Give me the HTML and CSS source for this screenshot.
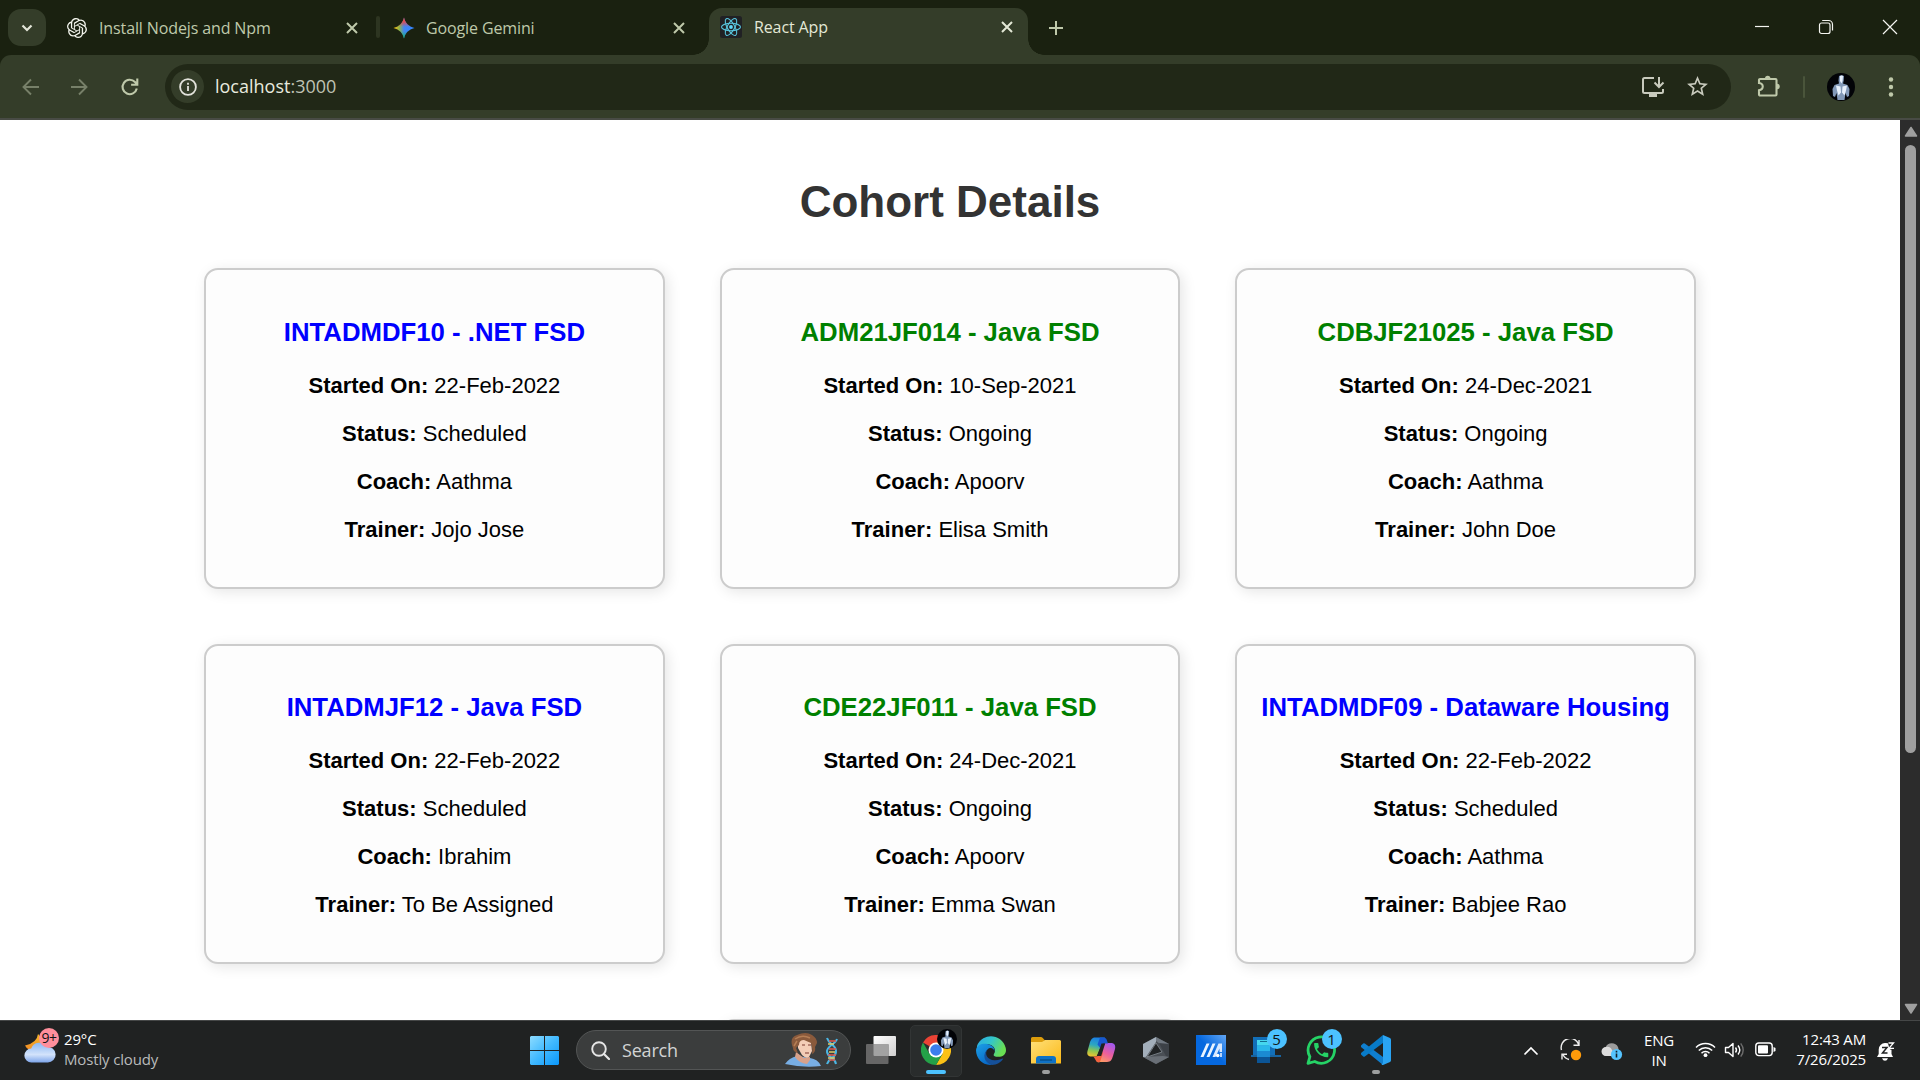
FILE: index.html
```html
<!DOCTYPE html>
<html lang="en">
<head>
<meta charset="utf-8">
<title>React App</title>
<link rel="stylesheet" href="styles.css">
</head>
<body>
<div class="screen">
  <header class="tabstrip">
    <div class="tab-search"><svg width="14" height="14" viewBox="0 0 14 14"><path d="M2.500 4.500 7 9l4.500-4.500" fill="none" stroke="#e3e6d8" stroke-width="2.200"/></svg></div>
    <div class="tab tab-one">
      <svg class="fav" width="20" height="20" viewBox="0 0 24 24"><path fill="#f4f6ee" d="M22.2819 9.8211a5.9847 5.9847 0 0 0-.5157-4.9108 6.0462 6.0462 0 0 0-6.5098-2.9A6.0651 6.0651 0 0 0 4.9807 4.1818a5.9847 5.9847 0 0 0-3.9977 2.9 6.0462 6.0462 0 0 0 .7427 7.0966 5.98 5.98 0 0 0 .511 4.9107 6.051 6.051 0 0 0 6.5146 2.9001A5.9847 5.9847 0 0 0 13.2599 24a6.0557 6.0557 0 0 0 5.7718-4.2058 5.9894 5.9894 0 0 0 3.9977-2.9001 6.0557 6.0557 0 0 0-.7475-7.0729zm-9.022 12.6081a4.4755 4.4755 0 0 1-2.8764-1.0408l.1419-.0804 4.7783-2.7582a.7948.7948 0 0 0 .3927-.6813v-6.7369l2.02 1.1686a.071.071 0 0 1 .038.052v5.5826a4.504 4.504 0 0 1-4.4945 4.4944zm-9.6607-4.1254a4.4708 4.4708 0 0 1-.5346-3.0137l.142.0852 4.783 2.7582a.7712.7712 0 0 0 .7806 0l5.8428-3.3685v2.3324a.0804.0804 0 0 1-.0332.0615L9.74 19.9502a4.4992 4.4992 0 0 1-6.1408-1.6464zM2.3408 7.8956a4.485 4.485 0 0 1 2.3655-1.9728V11.6a.7664.7664 0 0 0 .3879.6765l5.8144 3.3543-2.0201 1.1685a.0757.0757 0 0 1-.071 0l-4.8303-2.7865A4.504 4.504 0 0 1 2.3408 7.872zm16.5963 3.8558L13.1038 8.364 15.1192 7.2a.0757.0757 0 0 1 .071 0l4.8303 2.7913a4.4944 4.4944 0 0 1-.6765 8.1042v-5.6772a.79.79 0 0 0-.407-.667zm2.0107-3.0231l-.142-.0852-4.7735-2.7818a.7759.7759 0 0 0-.7854 0L9.409 9.2297V6.8974a.0662.0662 0 0 1 .0284-.0615l4.8303-2.7866a4.4992 4.4992 0 0 1 6.6802 4.66zM8.3065 12.863l-2.02-1.1638a.0804.0804 0 0 1-.038-.0567V6.0742a4.4992 4.4992 0 0 1 7.3757-3.4537l-.142.0805L8.704 5.459a.7948.7948 0 0 0-.3927.6813zm1.0976-2.3654l2.602-1.4998 2.6069 1.4998v2.9994l-2.5974 1.4997-2.6067-1.4997Z"/></svg>
      <span class="tab-title">Install Nodejs and Npm</span>
      <svg class="x" width="12" height="12" viewBox="0 0 12 12"><path d="M1 1l10 10M11 1 1 11"/></svg>
    </div>
    <div class="tab-sep"></div>
    <div class="tab tab-two">
      <svg class="fav" width="22" height="22" viewBox="0 0 22 22"><defs>
        <linearGradient id="gm" x1="0" y1=".5" x2="1" y2=".5"><stop offset=".02" stop-color="#fbbc04"/><stop offset=".28" stop-color="#8fb44e"/><stop offset=".5" stop-color="#4285f4"/><stop offset="1" stop-color="#3186ff"/></linearGradient>
        <linearGradient id="gmv" x1="0" y1="0" x2="0" y2="1"><stop offset="0" stop-color="#f4433c"/><stop offset=".2" stop-color="#f4433c" stop-opacity=".85"/><stop offset=".45" stop-color="#f4433c" stop-opacity="0"/><stop offset=".65" stop-color="#0ebc5f" stop-opacity="0"/><stop offset="1" stop-color="#0ebc5f"/></linearGradient></defs>
        <path fill="url(#gm)" d="M11 .5c1.200 5.400 4.500 8.800 10.500 10.500-6 1.700-9.300 5.100-10.500 10.500C9.800 16.100 6.500 12.700.5 11 6.500 9.300 9.800 5.900 11 .5z"/><path fill="url(#gmv)" d="M11 .5c1.200 5.400 4.500 8.800 10.500 10.500-6 1.700-9.300 5.100-10.500 10.500C9.800 16.100 6.500 12.700.5 11 6.500 9.300 9.800 5.900 11 .5z"/></svg>
      <span class="tab-title">Google Gemini</span>
      <svg class="x" width="12" height="12" viewBox="0 0 12 12"><path d="M1 1l10 10M11 1 1 11"/></svg>
    </div>
    <div class="tab tab-active">
      <svg class="fav" width="22" height="22" viewBox="0 0 22 22"><rect width="22" height="22" rx="2.500" fill="#202124"/><g fill="none" stroke="#58c4dc" stroke-width="1.100"><ellipse cx="11" cy="11" rx="9.500" ry="3.700"/><ellipse cx="11" cy="11" rx="9.500" ry="3.700" transform="rotate(60 11 11)"/><ellipse cx="11" cy="11" rx="9.500" ry="3.700" transform="rotate(120 11 11)"/></g><circle cx="11" cy="11" r="1.900" fill="#61dafb"/></svg>
      <span class="tab-title">React App</span>
      <svg class="x" width="12" height="12" viewBox="0 0 12 12"><path d="M1 1l10 10M11 1 1 11"/></svg>
    </div>
    <svg class="plus" width="14" height="14" viewBox="0 0 14 14"><path d="M7 0v14M0 7h14" stroke="#bfc9aa" stroke-width="2"/></svg>
    <div class="window-buttons">
      <svg width="16" height="16" viewBox="0 0 16 16"><path d="M1 7.500h14"/></svg>
      <svg width="16" height="16" viewBox="0 0 16 16"><rect x="1.500" y="4" width="10.500" height="10.500" rx="2"/><path d="M4.200 1.500h6.300a4 4 0 0 1 4 4v6"/></svg>
      <svg width="16" height="16" viewBox="0 0 16 16"><path d="M1 1l14 14M15 1 1 15"/></svg>
    </div>
  </header>

  <nav class="toolbar">
    <svg class="nav-i dim" width="18" height="18" viewBox="0 0 18 18"><path d="M17 9H2M9 1.500 1.500 9 9 16.500"/></svg>
    <svg class="nav-i dim fwd" width="18" height="18" viewBox="0 0 18 18"><path d="M1 9h15M9 1.500 16.500 9 9 16.500"/></svg>
    <svg class="nav-i reload" width="20" height="20" viewBox="0 0 20 20"><path d="M16.800 11.500A7.200 7.200 0 1 1 15 5l2 2.300M17.300 1.500v6.200h-6.200" /></svg>
    <div class="omnibox">
      <span class="info"><svg width="18" height="18" viewBox="0 0 18 18"><circle cx="9" cy="9" r="7.900" fill="none" stroke="#e3e3dc" stroke-width="1.800"/><path d="M9 8v5M9 4.800v1.900" stroke="#e3e3dc" stroke-width="1.800"/></svg></span>
      <span class="url">localhost<span class="port">:3000</span></span>
      <svg class="install" width="24" height="22" viewBox="0 0 24 22"><path d="M13 2H3.500A1.500 1.500 0 0 0 2 3.500v12A1.500 1.500 0 0 0 3.500 17h17a1.500 1.500 0 0 0 1.500-1.500V13M18 1v9M13.500 6.500 18 11l4.500-4.500" fill="none" stroke="#c8cabd" stroke-width="2"/><path d="M8 17h8v4H8z" fill="#c8cabd"/></svg>
      <svg class="star" width="25" height="25" viewBox="0 0 24 24"><path fill="#c8cabd" d="M22 9.240l-7.190-.62L12 2 9.190 8.630 2 9.240l5.460 4.730L5.820 21 12 17.270 18.180 21l-1.630-7.030L22 9.240zM12 15.400l-3.760 2.270 1-4.280-3.320-2.880 4.380-.38L12 6.100l1.710 4.040 4.380.38-3.320 2.880 1 4.280L12 15.400z"/></svg>
    </div>
    <svg class="puzzle" width="24" height="24" viewBox="0 0 24 24"><path d="M3 5h5.500M14 5h4.500a1 1 0 0 1 1 1v14.500a1 1 0 0 1-1 1H3a1 1 0 0 1-1-1v-4.300c5-.6 5-6.600 0-7.200V6a1 1 0 0 1 1-1h15" fill="none" stroke="#bfc9aa" stroke-width="2.100"/><path d="M8 4.500a2.700 2.700 0 0 1 5.400 0M20 9.700a2.800 2.800 0 0 1 0 5.600" fill="#bfc9aa"/></svg>
    <div class="bar-sep"></div>
    <svg class="avatar" width="28" height="28" viewBox="0 0 28 28"><defs><symbol id="pf" viewBox="0 0 28 28"><circle cx="14" cy="14" r="14" fill="#020307"/><path d="M12 3q2.500-1.500 5 0l-.3 4.500-.7 3 4.500 1.500 2 4-.5 7-2 1-1.500-4-1 7h-7l-1-7-1.500 4-2-1-.5-7 2-4 4.500-1.500-.5-3z" fill="#8299b8"/><path d="M13 3q2-1 3 0l-.5 5-1 2.500-1.500-2.500zM9 12.500l4.500 1 .5 6-2.500 3-1.500-5zM20 12.500l-4.500 1-.5 6 2.500 3 1.500-5z" fill="#e8f1fc"/></symbol></defs><use href="#pf"/></svg>
    <svg class="dots" width="6" height="22" viewBox="0 0 6 22" fill="#bfc9aa"><circle cx="3" cy="3.500" r="2.200"/><circle cx="3" cy="11" r="2.200"/><circle cx="3" cy="18.500" r="2.200"/></svg>
  </nav>

  <div class="viewport">
    <main class="page">
      <h1>Cohort Details</h1>
      <section class="cards">
        <article class="card"><h3 class="scheduled">INTADMDF10 - .NET FSD</h3><p><b>Started On:</b> 22-Feb-2022</p><p><b>Status:</b> Scheduled</p><p><b>Coach:</b> Aathma</p><p><b>Trainer:</b> Jojo Jose</p></article>
        <article class="card"><h3 class="ongoing">ADM21JF014 - Java FSD</h3><p><b>Started On:</b> 10-Sep-2021</p><p><b>Status:</b> Ongoing</p><p><b>Coach:</b> Apoorv</p><p><b>Trainer:</b> Elisa Smith</p></article>
        <article class="card"><h3 class="ongoing">CDBJF21025 - Java FSD</h3><p><b>Started On:</b> 24-Dec-2021</p><p><b>Status:</b> Ongoing</p><p><b>Coach:</b> Aathma</p><p><b>Trainer:</b> John Doe</p></article>
        <article class="card"><h3 class="scheduled">INTADMJF12 - Java FSD</h3><p><b>Started On:</b> 22-Feb-2022</p><p><b>Status:</b> Scheduled</p><p><b>Coach:</b> Ibrahim</p><p><b>Trainer:</b> To Be Assigned</p></article>
        <article class="card"><h3 class="ongoing">CDE22JF011 - Java FSD</h3><p><b>Started On:</b> 24-Dec-2021</p><p><b>Status:</b> Ongoing</p><p><b>Coach:</b> Apoorv</p><p><b>Trainer:</b> Emma Swan</p></article>
        <article class="card"><h3 class="scheduled">INTADMDF09 - Dataware Housing</h3><p><b>Started On:</b> 22-Feb-2022</p><p><b>Status:</b> Scheduled</p><p><b>Coach:</b> Aathma</p><p><b>Trainer:</b> Babjee Rao</p></article>
        <article class="card"></article>
      </section>
    </main>
    <aside class="scrollbar">
      <svg width="14" height="12" viewBox="0 0 14 12"><path d="M7 1.500 12.500 10h-11z" fill="#9f9f9f" stroke="#9f9f9f" stroke-width="1.500" stroke-linejoin="round"/></svg>
      <div class="thumb"></div>
      <svg class="down" width="14" height="12" viewBox="0 0 14 12"><path d="M7 10 12.500 1.500h-11z" fill="#9f9f9f" stroke="#9f9f9f" stroke-width="1.500" stroke-linejoin="round"/></svg>
    </aside>
  </div>

  <footer class="taskbar">
    <div class="weather">
      <svg width="34" height="37" viewBox="0 0 34 37"><defs><linearGradient id="cl" x1="0" y1="0" x2="0" y2="1"><stop offset="0" stop-color="#8db8f2"/><stop offset=".6" stop-color="#d3e3fb"/><stop offset="1" stop-color="#7da5ea"/></linearGradient><linearGradient id="mn" x1="1" y1="0" x2="0" y2="1"><stop offset="0" stop-color="#f6bd2c"/><stop offset="1" stop-color="#f08a24"/></linearGradient></defs>
        <path d="M14 7q-1 9-13 11.500 3 6 11 5 8-1 10-8z" fill="url(#mn)"/>
        <path d="M7.500 35.500a7 7 0 0 1-.3-14A8.500 8.500 0 0 1 22.600 20a7.800 7.800 0 1 1 1 15.500z" fill="url(#cl)"/></svg>
      <span class="count pink">9+</span>
      <div class="two-line"><span>29°C</span><span class="soft">Mostly cloudy</span></div>
    </div>

    <div class="dock">
      <svg class="start" width="29" height="29" viewBox="0 0 29 29"><defs><linearGradient id="wn" x1="0" y1="0" x2="1" y2="1"><stop offset="0" stop-color="#8ddcff"/><stop offset=".5" stop-color="#41b9ff"/><stop offset="1" stop-color="#0a97fb"/></linearGradient></defs><path fill="url(#wn)" d="M1 0h13v14H0V1zM15 0h13l1 1v13H15zM0 15h14v14H1l-1-1zM15 15h14v13l-1 1H15z"/></svg>
      <div class="search">
        <svg width="19" height="19" viewBox="0 0 19 19"><circle cx="8" cy="8" r="6.800" fill="#4b4c4c" stroke="#e6e6e6" stroke-width="1.900"/><path d="M13 13l5 5" stroke="#e6e6e6" stroke-width="2.200" stroke-linecap="round"/></svg>
        <span>Search</span>
        <svg class="bloom" width="54" height="34" viewBox="0 0 54 34"><path d="M0 31q4-6 12-8l13 2q8 1 11 8-18 2-36-2z" fill="#78aee4"/><path d="M11 19l8 6 6-1v3l-3 4q-8-1-12-7z" fill="#d8a18a"/><path d="M13 8q6-4 13 1l1 9-3 6q-3 2-7-2l-4-7z" fill="#f3cdb7"/><path d="M7 12Q5 4 12 2q9-4 15 0 5 3 5 8l-2 4q1 5-3 7 1-6-1-11l-7-3q-5 0-5 5l-3 3 2 5q-5-1-5-5z" fill="#8a5a3c"/><path d="M10 6q7-5 15-1M9 13l3-5" stroke="#b57e55" stroke-width="1.500" fill="none"/><path d="M17 12h3M23 12h3M20 20h4" stroke="#7c3b31" stroke-width="1.100"/><path d="M42 5c2 7 10 7 9 14s-7 5-9 12M52 6c-2 6-11 7-10 13s8 5 9 12" fill="none" stroke="#4bb6e4" stroke-width="2"/><path d="M44 8h7M44 16h7M43 22h8M44 27h6" stroke="#e2574c" stroke-width="1.600"/><path d="M43 11h6M44 19h6M43 25h7" stroke="#dccb6b" stroke-width="1.300"/></svg>
      </div>
      <div class="app"><svg width="30" height="30" viewBox="0 0 30 30"><defs><linearGradient id="tv" x1="0" y1="0" x2="1" y2="1"><stop offset="0" stop-color="#fff"/><stop offset="1" stop-color="#cfcfcf"/></linearGradient></defs><rect x="7.500" y="1" width="22.500" height="20" rx="1" fill="url(#tv)"/><rect x="0" y="9" width="22.500" height="20" rx="1" fill="#666"/><path d="M7.500 9h15v12h-14a1 1 0 0 1-1-1z" fill="#a2a2a2"/></svg></div>
      <div class="app current"><svg width="30" height="30" viewBox="0 0 30 30"><path d="M15 15 2 7.500A15 15 0 0 1 28 7.500z" fill="#ea4335"/><path d="M15 0a15 15 0 0 1 13 7.500H15z" fill="#ea4335"/><path d="M28 7.500A15 15 0 0 1 15 30l6.500-11.200L15 7.500z" fill="#fbc116"/><path d="M2 7.500A15 15 0 0 0 15 30l6.500-11.200-13 0z" fill="#24a148"/><circle cx="15" cy="15" r="7.500" fill="#fff"/><circle cx="15" cy="15" r="5.800" fill="#3b7ded"/></svg><svg class="mini" width="20" height="20" viewBox="0 0 28 28"><use href="#pf"/></svg></div>
      <div class="app"><svg width="30" height="30" viewBox="0 0 30 30"><defs><linearGradient id="e1" x1="0" y1="0" x2="1" y2=".4"><stop offset="0" stop-color="#2caae3"/><stop offset=".5" stop-color="#32c5cc"/><stop offset="1" stop-color="#69df53"/></linearGradient><linearGradient id="e2" x1="0" y1="0" x2=".6" y2="1"><stop offset="0" stop-color="#1ca0e6"/><stop offset="1" stop-color="#0867c6"/></linearGradient></defs><path d="M1 11A15 15 0 0 1 30 15c0 5-4 7-8 6.800-4 0-5-1.300-4-2.800C21 14 17 9.500 11 9 6 8.500 2 11 .8 14z" fill="url(#e1)"/><path d="M0 15C1 9.500 7 8 12 9.200 16 10 19 13 18.500 16.500 18 13 14 12 11.500 14.500 6 20 11 28 16 30 7 30.500 0 24 0 15z" fill="url(#e2)"/><path d="M11.500 14.500C8 19 11.500 25 18.500 25.300c4 .2 7-1.500 8.800-1.700C25 27.500 20.500 30 16 30 8 28 6 19 11.500 14.500z" fill="#155099"/></svg></div>
      <div class="app running"><svg width="30" height="30" viewBox="0 0 30 30"><defs><linearGradient id="fo" x1="0" y1="0" x2="1" y2="1"><stop offset="0" stop-color="#ffe07a"/><stop offset="1" stop-color="#fbb917"/></linearGradient></defs><path d="M0 3.500A1.500 1.500 0 0 1 1.500 2h8.300q1.200 0 2 .9L14 5.500h14.500A1.500 1.500 0 0 1 30 7v5H0z" fill="#dd9d0c"/><path d="M0 7h11l3.200-2H28.500A1.500 1.500 0 0 1 30 6.500v22H0z" fill="url(#fo)"/><path d="M5 28.500V24a3 3 0 0 1 3-3h14a3 3 0 0 1 3 3v4.500z" fill="#0f72c6"/><path d="M9 25h12" stroke="#064c86" stroke-width="1.300"/></svg></div>
      <div class="app"><svg width="30" height="30" viewBox="0 0 30 30"><defs><linearGradient id="c1" x1=".5" y1="0" x2=".3" y2="1"><stop offset="0" stop-color="#1a7ee6"/><stop offset=".4" stop-color="#2da8c0"/><stop offset=".7" stop-color="#8bc653"/><stop offset="1" stop-color="#efc32f"/></linearGradient><linearGradient id="c2" x1=".7" y1="0" x2=".2" y2="1"><stop offset="0" stop-color="#a458ec"/><stop offset=".5" stop-color="#ed5f9c"/><stop offset="1" stop-color="#ffa25c"/></linearGradient></defs><path d="M10 25.500c1 2 3 2 4 1.500h7c4 0 5-3 6-6l2-7c1-4-1-6-4-6h-6z" fill="url(#c2)"/><path d="M19 2.500H9C6 2.500 4.500 5 3.500 9l-2 7c-1 4 1 5.500 4 5.500h5z" fill="url(#c1)"/><path d="M14 2.500h3c4 0 4 3.500 5 6h-4q-2 0-2.500 2l-1 3-3-4z" fill="#1757cf"/><path d="M7 21.500h3q2 0 3-2.500l1-3 3 2-3 9c-5 1-4-3.500-7-5.500z" fill="#f3613f"/><path d="M15.500 8.500h3.700l-4 12.500h-4z" fill="#202323"/></svg></div>
      <div class="app"><svg width="30" height="30" viewBox="0 0 30 30"><path d="M15 2 28 9v13l-13 7-13-7V9z" fill="#4a4f55"/><path d="M15 2v5L5 22l-3 0V9z" fill="#a3afbb"/><path d="M15 2 28 9v7L15 6z" fill="#6f7780"/><path d="M28 9v13l-3-1L18 8z" fill="#3c4147"/><path d="M2 22 22 21l6 1-13 7z" fill="#696f76"/><path d="M15 8 21 17 6 22z" fill="#202325"/><path d="M15 8 21 17 6 22z" fill="none" stroke="#8e969e" stroke-width=".7"/></svg></div>
      <div class="app"><svg width="30" height="30" viewBox="0 0 30 30"><defs><linearGradient id="ma" x1="0" y1="1" x2="1" y2="0"><stop offset=".5" stop-color="#0568df"/><stop offset="1" stop-color="#62a6f4"/></linearGradient></defs><path fill="url(#ma)" d="M0 0h30v30H0z"/><path d="M4.500 22h3L13.500 8.500h-3zM10.500 22h3L19.500 8.500h-3z" fill="#e8f3ff"/><path d="M16.500 22h3l4-8.500V17h2.500V8.500h-3.500z" fill="#d8e9ff"/><circle cx="21.700" cy="20.500" r="1.800" fill="#fff"/><path d="M24 18h2v4h-2z" fill="#b9d5fb"/></svg></div>
      <div class="app"><svg width="30" height="30" viewBox="0 0 30 30"><path d="M2 2h22v20H2z" fill="#126fb8"/><path d="M0 20h30v2H0z" fill="#1763a0"/><path d="M6 5h13v23H6z" fill="#1b8bd2"/><path d="M6 5h13v5.500H6z" fill="#45d7ee"/><path d="M6 10.500h13V16H6z" fill="#29b7ea"/><path d="M6 22h13v6H6z" fill="#0b5596"/><path d="M9 6.500h7" stroke="#126e91"/></svg><span class="count blue">5</span></div>
      <div class="app"><svg width="30" height="30" viewBox="0 0 30 30"><path d="M2 28.300l1.900-6.600A13.200 13.200 0 1 1 8.700 26.500z" fill="none" stroke="#25d366" stroke-width="2.800" stroke-linejoin="round"/><path transform="translate(5.700 5.600) scale(.79)" fill="#25d366" d="M6.620 10.790c1.440 2.830 3.760 5.140 6.590 6.590l2.200-2.200c.27-.27.67-.36 1.020-.24 1.120.37 2.330.57 3.570.57.55 0 1 .45 1 1V20c0 .55-.45 1-1 1-9.390 0-17-7.610-17-17 0-.55.45-1 1-1h3.500c.55 0 1 .45 1 1 0 1.250.2 2.450.57 3.570.11.35.03.74-.25 1.020l-2.200 2.200z"/></svg><span class="count blue">1</span></div>
      <div class="app running"><svg width="30" height="30" viewBox="0 0 30 30"><path d="M0 10.500 2.200 8.500q.8-.5 1.600 0L22 22v8L.3 12.300Q-.8 11.300 0 10.500z" fill="#0f7fd0"/><path d="M0 19.500 2.200 21.500q.8.500 1.600 0L22 8V0L.3 17.700q-1.100 1 0 1.800z" fill="#087bc8"/><path d="M22 0l7 3q1 .5 1 1.800v20.400q0 1.300-1 1.800l-7 3q-1 0-1.500-.6L22 28z" fill="#2aa4f3"/></svg></div>
    </div>

    <div class="tray">
      <svg class="up" width="16" height="10" viewBox="0 0 16 10"><path d="M1.500 8.500 8 2l6.500 6.500" fill="none" stroke="#fff" stroke-width="1.700"/></svg>
      <svg class="sync" width="22" height="22" viewBox="0 0 22 22"><g fill="none" stroke="#eee" stroke-width="1.400"><path d="M1.500 11A9 9 0 0 1 19 6M19 1v5.300h-5.500M9 20.500A9 9 0 0 1 3 15.500M2 20.500v-5.200h5"/></g><circle cx="16" cy="16" r="5.200" fill="#ff9b0a"/></svg>
      <svg class="cloud" width="22" height="20" viewBox="0 0 22 20"><path d="M5 15a4.500 4.500 0 0 1-.5-8.800A7 7 0 0 1 17 6l2 8z" fill="#9b9b9b"/><path d="M5 15a4.500 4.500 0 0 1 0-9q4-1 6 3l4 6z" fill="#dcdcdc"/><circle cx="15.500" cy="13.500" r="5.600" fill="#55c4ff"/><path d="M15.500 12.500v4M15.500 9.800v1.700" stroke="#13222c" stroke-width="1.600"/></svg>
      <div class="lang"><span>ENG</span><span>IN</span></div>
      <svg class="wifi" width="21" height="17" viewBox="0 0 21 17"><g fill="none" stroke="#fff" stroke-width="1.500"><path d="M1 6.500a13.500 13.500 0 0 1 19 0M3.800 9.500a9.500 9.500 0 0 1 13.400 0M6.500 12.200a5.700 5.700 0 0 1 8 0"/></g><circle cx="10.500" cy="14.200" r="1.900" fill="#fff"/></svg>
      <svg class="sound" width="22" height="18" viewBox="0 0 22 18"><g fill="none" stroke="#fff" stroke-width="1.400"><path d="M1.500 6.500h3L9 2.500v13l-4.500-4h-3z" stroke-linejoin="round"/><path d="M11.500 6.500q2 2.500 0 5M14 4.500q3.600 4.500 0 9"/><path d="M16.700 2.300q5 6.700 0 13.400" stroke="#6c6c6c"/></g></svg>
      <svg class="battery" width="21" height="15" viewBox="0 0 21 15"><rect x=".8" y="1" width="16.400" height="12.600" rx="3" fill="none" stroke="#fff" stroke-width="1.400"/><rect x="3" y="3.200" width="10" height="8.200" rx="1" fill="#fff"/><path d="M18.500 5v5l2-1V6z" fill="#fff"/></svg>
      <div class="clock"><span>12:43 AM</span><span>7/26/2025</span></div>
      <svg class="bell" width="20" height="21" viewBox="0 0 20 21"><path d="M9 2a6.500 6.500 0 0 0-6.300 6.500V13L1 16h16l-1.500-3V9L13 2.300zM6 17.200h6q-1 2.500-3 2.500t-3-2.500z" fill="#fff"/><path d="M6 6.500h5L6.500 12h5" fill="none" stroke="#202223" stroke-width="1.500"/><path d="M11 0h9v8.500h-6z" fill="#202223"/><path d="M12.500 2h5L13 7.300h5" fill="none" stroke="#fff" stroke-width="1.300"/></svg>
    </div>
  </footer>
</div>
</body>
</html>
```

FILE: styles.css
```css
* { box-sizing: border-box; }
body { margin: 0; }
svg { display: block; flex: none; }
.screen { width: 1920px; height: 1080px; overflow: hidden; display: flex; flex-direction: column; font-family: "Open Sans", "Noto Sans", sans-serif; background: #1a2110; }

/* Tab strip */
.tabstrip { height: 55px; display: flex; align-items: flex-start; background: #1a2110; padding-left: 8px; }
.tab-search { width: 38px; height: 37px; margin-top: 9px; border-radius: 13px; background: #343d29; display: flex; align-items: center; justify-content: center; }
.tab { height: 55px; display: flex; align-items: center; color: #bfc9aa; font-size: 16px; }
.tab-title { flex: 1; white-space: nowrap; letter-spacing: -0.12px; line-height: 20px; }
.x { fill: none; stroke: #bfc9aa; stroke-width: 2; }
.tab-one { width: 312px; margin-left: 21px; padding-right: 2px; gap: 12px; }
.tab-one .x { margin-right: 19px; }
.tab-sep { width: 4px; height: 22px; margin: 16px 12px 0 -3px; border-radius: 2px; background: #2d3521; }
.tab-two { width: 293px; margin-left: 1px; padding-right: 1px; gap: 11px; margin-right: 23px; }
.tab-active { position: relative; width: 319px; height: 47px; margin-top: 8px; border-radius: 13px 13px 0 0; background: #343d29; color: #e3e8d6; padding: 0 15px 9px 11px; gap: 12px; }
.tab-active::before, .tab-active::after { content: ""; position: absolute; bottom: 0; width: 16px; height: 16px; }
.tab-active::before { left: -16px; background: radial-gradient(circle at 0 0, transparent 15.5px, #343d29 16px); }
.tab-active::after { right: -16px; background: radial-gradient(circle at 100% 0, transparent 15.5px, #343d29 16px); }
.tab-active .x { stroke: #e3e8d6; }
.plus { margin: 21px 0 0 21px; }
.window-buttons { margin: 19px 22px 0 auto; display: flex; gap: 48px; }
.window-buttons svg { fill: none; stroke: #f4f5f0; stroke-width: 1.2; }

/* Toolbar */
.toolbar { height: 65px; background: #343d29; border-bottom: 2px solid #484b45; border-radius: 11px 11px 0 0; display: flex; align-items: center; padding: 0 26px 0 22px; }
.nav-i { fill: none; stroke: #bfc9aa; stroke-width: 2.1; }
.dim { stroke: #778069; stroke-width: 1.9; }
.fwd { margin-left: 30px; }
.reload { margin-left: 32px; }
.omnibox { width: 1566px; height: 46px; margin-left: 25px; border-radius: 23px; background: #212817; display: flex; align-items: center; padding: 0 21px 0 6px; }
.info { width: 33px; height: 33px; border-radius: 50%; background: #343d29; display: flex; align-items: center; justify-content: center; }
.url { flex: 1; margin-left: 11px; color: #e8ebdf; font-size: 18px; line-height: 24px; padding-bottom: 1px; letter-spacing: 0; }
.port { color: #bfc2b4; }
.star { margin-left: 20px; }
.puzzle { margin: -2px 0 0 26px; }
.bar-sep { width: 2px; height: 22px; margin-left: 22px; background: #4a553b; border-radius: 1px; }
.avatar { margin-left: 22px; }
.dots { margin-left: auto; }

/* Web page */
.viewport { height: 900px; display: flex; background: #fff; overflow: hidden; }
.page { width: 1900px; height: 900px; overflow: hidden; padding-top: 57px; font-family: "Liberation Sans", Arial, sans-serif; text-align: center; }
h1 { margin: 0 0 41px; font-size: 44px; line-height: 50px; color: #333; }
.cards { display: flex; flex-wrap: wrap; justify-content: center; gap: 55px; }
.card { width: 460.6px; height: 320.5px; border: 2px solid #ccc; border-radius: 14px; background: #fdfdfd; box-shadow: 3px 3px 14px rgba(0, 0, 0, 0.1); padding: 22px 20px; color: #000; }
.card h3 { margin: 24.9px 0 25.9px; font-size: 25.74px; line-height: 30px; white-space: nowrap; }
.card p { margin: 0 0 22px; font-size: 22px; line-height: 26px; }
.scheduled { color: #00f; }
.ongoing { color: #008000; }
.scrollbar { width: 20px; background: #2c2c2c; display: flex; flex-direction: column; align-items: center; padding: 6px 0 5px 1px; }
.thumb { width: 11px; height: 608px; margin-top: 7px; border-radius: 6px; background: #9f9f9f; }
.down { margin-top: auto; }

/* Taskbar */
.taskbar { height: 60px; background: #202222; border-top: 1px solid #454747; color: #fff; display: flex; font-size: 15px; line-height: 20px; }
.weather { position: relative; width: 530px; padding: 6px 0 0 24px; display: flex; }
.two-line { display: flex; flex-direction: column; margin: 2px 0 0 6px; letter-spacing: -0.15px; }
.soft { color: #b9bbbb; }
.count { position: absolute; width: 20px; height: 20px; border-radius: 50%; color: #101414; font-size: 14px; line-height: 20px; text-align: center; }
.pink { left: 39px; top: 7px; background: #ff8f9c; letter-spacing: -0.5px; }
.blue { left: 28.5px; top: 8px; background: #4cc2ff; font-size: 15px; }
.dock { display: flex; width: 874px; }
.start { margin-top: 15px; }
.search { width: 275px; height: 40px; margin: 9px 2px 0 17px; border-radius: 20px; background: #3b3d3d; border: 1px solid #535555; display: flex; align-items: center; padding: 0 11px 0 14px; font-size: 18px; color: #d2d4d4; }
.search span { margin-left: 12px; flex: 1; letter-spacing: -0.2px; }
.app { position: relative; width: 55px; height: 59px; padding: 14px 0 0 12.5px; flex: none; }
.current::before { content: ""; position: absolute; left: 2px; top: 4px; width: 50px; height: 50px; border-radius: 5px; background: #292c2c; border: 1px solid #323535; }
.current svg { position: relative; }
.current .mini { position: absolute; left: 28.5px; top: 8px; }
.current::after, .running::after { content: ""; position: absolute; top: 49px; height: 4px; border-radius: 2px; }
.current::after { left: 18px; width: 20px; background: #4cc2ff; }
.running::after { left: 23.5px; width: 8px; background: #9c9e9e; }
.tray { flex: 1; position: relative; display: flex; padding-left: 119px; }
.up { margin-top: 25px; }
.sync { margin: 18px 0 0 21px; }
.cloud { margin: 20px 0 0 19px; }
.lang, .clock { display: flex; flex-direction: column; padding-top: 9px; letter-spacing: -0.2px; }
.lang { width: 32px; margin-left: 20px; align-items: center; }
.wifi { margin: 20px 0 0 20px; }
.sound { margin: 20px 0 0 8px; }
.battery { margin: 21px 0 0 9px; }
.clock { width: 80px; margin-left: 10px; align-items: flex-end; padding-top: 8px; letter-spacing: -0.15px; white-space: nowrap; }
.bell { margin: 20px 0 0 10px; }
```
